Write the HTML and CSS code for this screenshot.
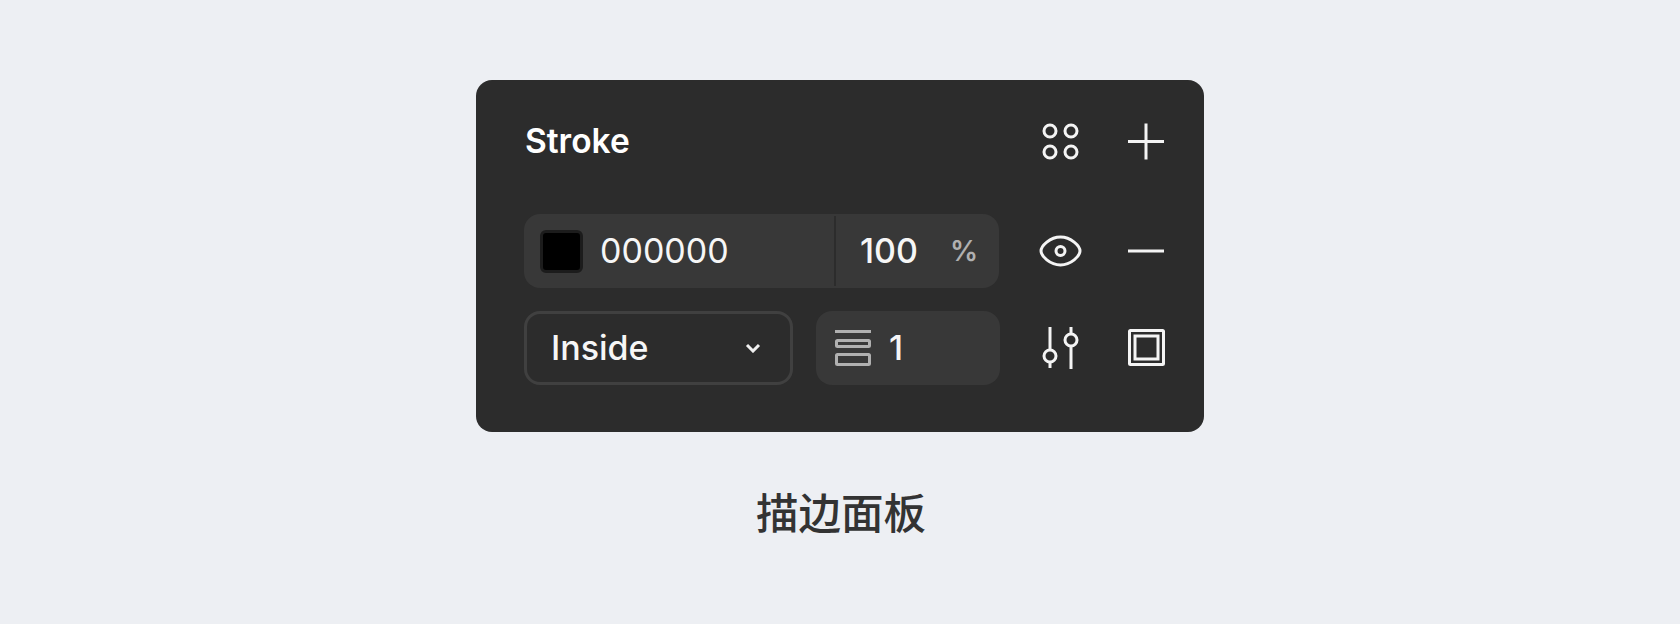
FILE: index.html
```html
<!DOCTYPE html>
<html lang="zh">
<head>
<meta charset="utf-8">
<title>描边面板</title>
<link rel="stylesheet" href="styles.css">
</head>
<body>
<main class="page">
  <section class="card">
    <div class="row row-title">
      <h2 class="title">Stroke</h2>
      <div class="icons">
        <svg class="icon" viewBox="0 0 40 40"><circle cx="10" cy="10" r="6"/><circle cx="31" cy="10" r="6"/><circle cx="10" cy="31" r="6"/><circle cx="31" cy="31" r="6"/></svg>
        <svg class="icon" viewBox="0 0 40 40"><path d="M2 20.500H38M20 2.500V38.500"/></svg>
      </div>
    </div>
    <div class="row row-color">
      <div class="field field-color">
        <div class="hex"><span class="swatch"></span><span class="value value-hex">000000</span></div>
        <div class="opacity"><span class="value">100</span><span class="unit">%</span></div>
      </div>
      <div class="icons">
        <svg class="icon" viewBox="0 0 40 40"><path d="M1 20C1 15 10 6 20.500 6S40 15 40 20S31 34 20.500 34S1 25 1 20Z"/><circle cx="20.500" cy="20" r="4.500"/></svg>
        <svg class="icon" viewBox="0 0 40 40"><path d="M2 20H38"/></svg>
      </div>
    </div>
    <div class="row row-stroke">
      <div class="select"><span class="value">Inside</span>
        <svg class="chevron" viewBox="0 0 16 10"><path d="M2 2L8 8L14 2"/></svg>
      </div>
      <div class="field field-weight">
        <svg class="weight-icon" viewBox="0 0 36 36"><path d="M0 1.500H36"/><rect x="1.500" y="10.500" width="33" height="6" rx="1"/><rect x="1.500" y="24.500" width="33" height="10" rx="1"/></svg>
        <span class="value">1</span>
      </div>
      <div class="icons">
        <svg class="icon" viewBox="0 0 40 40"><path d="M10 -1V22M10 34V40M31 -1V6M31 18V41"/><circle cx="10" cy="28" r="6"/><circle cx="31" cy="12" r="6"/></svg>
        <svg class="icon" viewBox="0 0 40 40"><rect x="3.500" y="2.500" width="34" height="34" rx="1"/><rect x="9" y="8" width="23" height="23"/></svg>
      </div>
    </div>
  </section>
  <p class="caption">描边面板</p>
</main>
</body>
</html>
```

FILE: styles.css
```css
* {
  box-sizing: border-box;
}

html,
body {
  margin: 0;
  height: 100%;
}

body {
  background: #edeff3;
  font-family: Inter, "Noto Sans CJK SC", sans-serif;
}

.page {
  display: flex;
  flex-direction: column;
  align-items: center;
  padding-top: 80px;
}

.card {
  width: 728px;
  height: 352px;
  padding: 41px 38px 0 48px;
  display: flex;
  flex-direction: column;
  background: #2c2c2c;
  border-radius: 16px;
  color: #fff;
}

.row {
  display: flex;
  align-items: center;
  justify-content: space-between;
}

.row-title {
  height: 40px;
  margin-bottom: 53px;
}

.row-color {
  height: 74px;
  margin-bottom: 23px;
}

.row-stroke {
  height: 74px;
}

.title {
  margin: 0;
  padding-left: 1px;
  font-size: 33.5px;
  line-height: 39px;
  font-weight: 600;
}

.icons {
  display: flex;
  gap: 46px;
}

.icon {
  display: block;
  width: 40px;
  height: 40px;
  overflow: visible;
  fill: none;
  stroke: #f4f4f4;
  stroke-width: 3;
}

.value {
  font-size: 34px;
  line-height: 40px;
  font-weight: 500;
  color: #f6f6f6;
}

.value-hex {
  font-weight: 400;
}

.field {
  height: 74px;
  display: flex;
  align-items: center;
  background: #383838;
  border-radius: 16px;
}

.field-color {
  width: 475px;
}

.hex {
  width: 310px;
  height: 100%;
  padding-left: 16px;
  display: flex;
  align-items: center;
  gap: 17px;
}

.swatch {
  width: 43px;
  height: 43px;
  background: #000;
  border: 3px solid #1c1c1c;
  border-radius: 6px;
}

.opacity {
  flex: 1;
  height: 70px;
  padding: 0 21px 0 24px;
  display: flex;
  align-items: center;
  justify-content: space-between;
  border-left: 2px solid #2c2c2c;
}

.unit {
  font-size: 28px;
  font-weight: 600;
  color: #b0b0b0;
}

.select {
  flex: none;
  width: 269px;
  height: 74px;
  padding: 0 29px 0 24px;
  display: flex;
  align-items: center;
  justify-content: space-between;
  border: 3px solid #404040;
  border-radius: 16px;
}

.chevron {
  width: 16px;
  height: 10px;
  fill: none;
  stroke: #f0f0f0;
  stroke-width: 3;
}

.field-weight {
  width: 184px;
  margin-left: 23px;
  margin-right: 40px;
  padding-left: 19px;
  gap: 18px;
}

.row-stroke .icons {
  margin-left: auto;
}

.weight-icon {
  width: 36px;
  height: 36px;
  fill: none;
  stroke: #b0b0b0;
  stroke-width: 3;
}

.caption {
  margin: 51px 0 0;
  padding-left: 2px;
  font-family: "Noto Sans CJK SC", sans-serif;
  font-size: 42.5px;
  line-height: 56px;
  font-weight: 500;
  color: #333;
}
```
